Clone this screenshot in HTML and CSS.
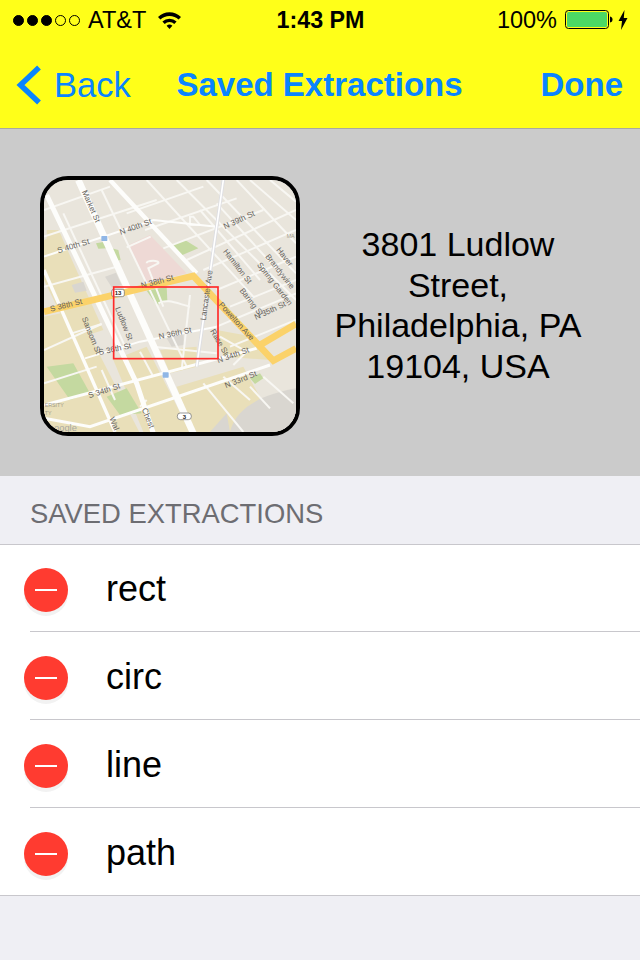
FILE: index.html
```html
<!DOCTYPE html>
<html lang="en">
<head>
  <meta charset="UTF-8" />
  <title>Saved Extractions</title>
  <link rel="stylesheet" href="styles.css">
</head>
<body>
  <div class="top-bar">
    <div class="status-bar">
      <div class="status-left">
        <div class="signal">
          <span class="dot"></span><span class="dot"></span><span class="dot"></span><span class="dot empty"></span><span class="dot empty"></span>
        </div>
        <span class="carrier">AT&amp;T</span>
        <svg class="wifi" width="25" height="20" viewBox="0 0 25 20">
          <path d="M1 7 A16.5 16.5 0 0 1 24 7 L21.6 9.6 A13 13 0 0 0 3.4 9.6 Z" />
          <path d="M5.4 11.5 A10.3 10.3 0 0 1 19.6 11.5 L17.3 14 A7 7 0 0 0 7.7 14 Z" />
          <path d="M9.6 15.8 A4.4 4.4 0 0 1 15.4 15.8 L12.5 19 Z" />
        </svg>
      </div>
      <div class="status-time">1:43 PM</div>
      <div class="status-right">
        <span class="percent">100%</span>
        <svg class="battery" width="49" height="20" viewBox="0 0 49 20">
          <rect x="0.5" y="0.5" width="43" height="18" rx="3" fill="none" stroke="#000" />
          <rect x="2" y="2" width="40" height="15" rx="1.5" fill="#4cd964" />
          <path d="M45 6.5 C47 7 47.5 8 47.5 9.5 C47.5 11 47 12 45 12.5 Z" />
        </svg>
        <svg class="bolt" width="10" height="20" viewBox="0 0 10 20">
          <path d="M6.5 0 L0.5 11 H4 L3 20 L9.5 8 H5.8 Z" />
        </svg>
      </div>
    </div>
    <div class="nav-bar">
      <a class="nav-back">
        <svg width="26" height="42" viewBox="0 0 26 42">
          <path d="M23 3.5 L4.5 21 L23 38.5" fill="none" stroke="#0a84ff" stroke-width="5.5" />
        </svg>
        <span>Back</span>
      </a>
      <div class="nav-title">Saved Extractions</div>
      <a class="nav-done">Done</a>
    </div>
  </div>

  <div class="summary">
    <div class="map-frame">
      <svg class="map" viewBox="42 30 756 756" preserveAspectRatio="none">
        <rect x="42" y="30" width="756" height="756" fill="#e9e5dc" />

        <!-- tan blocks -->
        <g fill="#e9dfb9">
          <path d="M42 210 L90 190 L220 480 L130 510 L42 330 Z" />
          <path d="M42 440 L140 420 L330 790 L42 790 Z" />
          <path d="M250 570 L350 530 L480 786 L340 786 Z" />
          <path d="M390 540 L500 530 L500 590 L420 610 Z" />
          <path d="M440 650 L640 590 L700 700 L600 790 L490 786 Z" />
          <path d="M560 480 L670 500 L720 570 L580 560 Z" />
          <path d="M50 180 L85 180 L95 200 L50 215 Z" />
        </g>

        <path d="M295 225 L360 195 L470 310 L350 340 Z" fill="#eed9d5" />
        <g fill="#c4d9a0">
          <path d="M420 225 L465 210 L505 235 L450 258 Z" />
          <path d="M350 362 L410 350 L412 392 L380 405 Z" />
          <path d="M50 590 L130 580 L180 670 L120 690 Z" />
          <path d="M230 680 L290 655 L335 730 L270 735 Z" />
          <path d="M198 220 L225 215 L232 235 L205 236 Z" />
          <path d="M245 235 L265 240 L272 270 L258 272 Z" />
          <path d="M660 625 L690 610 L700 625 L675 642 Z" />
        </g>
        <g fill="#d9d6d0">
          <path d="M225 320 L258 308 L275 345 L245 352 Z" />
          <path d="M125 345 L160 335 L170 362 L135 368 Z" />
          <path d="M410 505 L460 490 L462 525 L425 530 Z" />
          <path d="M540 786 L590 730 L600 786 Z" />
          <path d="M600 786 C620 700 720 670 798 655 L798 786 Z" />
        </g>

        <!-- small streets -->
        <g fill="none" stroke="#f8f7f3" stroke-width="6">
          <path d="M42 120 L240 50" />
          <path d="M42 200 L380 90" />
          <path d="M290 130 L520 50" />
          <path d="M345 180 L620 85" />
          <path d="M400 235 L700 120" />
          <path d="M470 270 L798 120" />
          <path d="M520 300 L798 180" />
          <path d="M560 360 L798 260" />
          <path d="M600 410 L798 330" />
          <path d="M42 350 L260 290" />
          <path d="M290 232 L362 200" />
          <path d="M42 540 L215 462" />
          <path d="M125 490 L215 462" />
          <path d="M560 470 L798 370" />
          <path d="M600 530 L798 450" />
          <path d="M440 30 L798 390" />
          <path d="M530 30 L798 310" />
          <path d="M620 30 L798 220" />
          <path d="M350 30 L670 380" />
          <path d="M660 30 L798 150" />
          <path d="M720 30 L798 95" />
          <path d="M215 60 L470 590" />
          <path d="M100 130 L290 540" />
          <path d="M510 120 L690 330" />
          <path d="M560 100 L760 320" />
          <path d="M480 375 L455 600" />
          <path d="M385 400 C410 385 440 400 480 410" />
          <path d="M350 280 C350 270 390 270 385 280 L355 295 L400 410" />
          <path d="M480 140 L480 165 L510 165 L490 140 Z" />
          <path d="M570 500 L650 545 L610 585" />
          <path d="M520 640 L640 786" />
          <path d="M580 620 L660 690" />
          <path d="M660 650 L720 715" />
          <path d="M700 620 L790 700" />
          <path d="M215 600 L255 690" />
          <path d="M330 545 L370 620" />
          <path d="M350 690 L330 710" />
          <path d="M370 530 L560 550" />
          <path d="M42 640 L200 590" />
        </g>

        <!-- main streets -->
        <g fill="none" stroke="#fdfdfb" stroke-linecap="butt">
          <path d="M145 30 L490 790" stroke-width="20" />
          <path d="M50 75 L320 640 L370 790" stroke-width="15" />
          <path d="M42 300 L255 786" stroke-width="10" />
          <path d="M240 30 L500 310" stroke-width="13" />
          <path d="M42 705 L680 535" stroke-width="9" />
          <path d="M42 745 L180 770 L720 585" stroke-width="9" />
          <path d="M165 565 L330 515 L560 470" stroke-width="6" />
          <path d="M42 260 L370 150 L560 170" stroke-width="6" />
          <path d="M780 786 L798 770" stroke-width="5" />
        </g>
        <path d="M580 30 L500 590" fill="none" stroke="#dcdde2" stroke-width="10" />
        <path d="M580 30 L500 590" fill="none" stroke="#fff" stroke-width="5" />

        <!-- yellow avenues -->
        <g fill="none" stroke="#fbd26a" stroke-width="20">
          <path d="M42 425 L490 318 L730 572 L798 535" />
          <path d="M690 525 L798 462" />
        </g>

        <!-- labels -->
        <g class="map-label">
          <text transform="translate(155 65) rotate(66)">Market St</text>
          <text transform="translate(272 195) rotate(-20)">N 40th St</text>
          <text transform="translate(85 250) rotate(-17)">S 40th St</text>
          <text transform="translate(585 178) rotate(-25)">N 39th St</text>
          <text transform="translate(578 245) rotate(52)">Hamilton St</text>
          <text transform="translate(738 240) rotate(52)">Haver</text>
          <text transform="translate(705 260) rotate(52)">Brandywine</text>
          <text transform="translate(680 285) rotate(52)">Spring Garden</text>
          <text transform="translate(628 362) rotate(52)">Baring St</text>
          <text transform="translate(678 450) rotate(-25)">N 35th St</text>
          <text transform="translate(335 355) rotate(-15)">N 38th St</text>
          <text transform="translate(62 425) rotate(-14)">S 38th St</text>
          <text transform="translate(155 445) rotate(68)">Sansom St</text>
          <text transform="translate(255 415) rotate(68)">Ludlow St</text>
          <text transform="translate(527 452) rotate(-82)">Lancaster Ave</text>
          <text transform="translate(565 405) rotate(48)">Powelton Ave</text>
          <text transform="translate(540 483) rotate(60)">Race St</text>
          <text transform="translate(388 508) rotate(-12)">N 36th St</text>
          <text transform="translate(208 555) rotate(-12)">S 36th St</text>
          <text transform="translate(565 580) rotate(-20)">N 34th St</text>
          <text transform="translate(178 685) rotate(-18)">S 34th St</text>
          <text transform="translate(588 655) rotate(-22)">N 33rd St</text>
          <text transform="translate(335 718) rotate(68)">Chest</text>
          <text transform="translate(238 745) rotate(68)">Wal</text>
          <text x="44" y="710" class="map-small">ERSITY</text>
          <text x="44" y="734" class="map-small">TY</text>
          <text x="770" y="203" class="map-small">MA</text>
          <text x="72" y="782" class="map-google">oogle</text>
        </g>

        <!-- route shields -->
        <rect x="245" y="358" width="38" height="22" rx="6" fill="#fff" stroke="#666" stroke-width="2" />
        <text x="264" y="376" class="map-shield">13</text>
        <rect x="442" y="729" width="42" height="20" rx="9" fill="#fff" stroke="#666" stroke-width="2" />
        <text x="463" y="746" class="map-shield">3</text>
        <rect x="214" y="198" width="18" height="15" rx="2" fill="#8fb6e6" />
        <rect x="398" y="607" width="18" height="16" rx="2" fill="#8fb6e6" />

        <!-- selection -->
        <rect x="251" y="351" width="313" height="215" fill="none" stroke="#ff2a2a" stroke-width="5" />
      </svg>
    </div>
    <div class="address">3801 Ludlow<br>Street,<br>Philadelphia, PA<br>19104, USA</div>
  </div>

  <div class="section-head">SAVED EXTRACTIONS</div>
  <ul class="list">
    <li class="list-row"><span class="delete"></span><span class="row-label">rect</span></li>
    <li class="list-row"><span class="delete"></span><span class="row-label">circ</span></li>
    <li class="list-row"><span class="delete"></span><span class="row-label">line</span></li>
    <li class="list-row"><span class="delete"></span><span class="row-label">path</span></li>
  </ul>
</body>
</html>
```

FILE: styles.css
```css
:root {
  --tint: #0a84ff;
  --table-bg: #efeff4;
  --line: #c8c7cc;
}

html, body {
  height: 100%;
}

body {
  margin: 0;
  height: 960px;
  overflow: hidden;
  background: var(--table-bg);
  font-family: 'Liberation Sans', Arial, sans-serif;
  color: #000;
}

.top-bar {
  height: 128px;
  background: #ffff19;
  border-bottom: 1px solid #a8a8a0;
}

.status-bar {
  height: 40px;
  padding: 0 12px 0 13px;
  display: grid;
  grid-template-columns: 1fr auto 1fr;
  align-items: center;
  font-size: 23.5px;
}

.status-left, .status-right {
  display: flex;
  align-items: center;
}

.status-right {
  justify-content: flex-end;
}

.signal {
  display: flex;
  gap: 3px;
}

.dot {
  width: 11px;
  height: 11px;
  box-sizing: border-box;
  border-radius: 50%;
  background: #000;
  border: 1px solid #000;
}

.dot.empty {
  background: none;
}

.carrier {
  margin-left: 8px;
}

.wifi {
  margin-left: 11px;
}

.status-time {
  font-weight: 700;
  font-size: 23.3px;
}

.percent {
  margin-right: 8px;
}

.bolt {
  margin-left: 4px;
}

.nav-bar {
  height: 88px;
  padding: 2px 17px 0 16px;
  box-sizing: border-box;
  display: grid;
  grid-template-columns: 1fr auto 1fr;
  align-items: center;
  font-size: 34.5px;
  color: var(--tint);
}

.nav-back {
  display: flex;
  align-items: center;
  gap: 12px;
}

.nav-title {
  font-weight: 700;
  font-size: 33px;
}

.nav-done {
  justify-self: end;
  font-weight: 700;
  font-size: 33px;
}

.summary {
  height: 347px;
  box-sizing: border-box;
  padding: 47px 0 0 40px;
  background: #cbcbcb;
  display: flex;
  align-items: flex-start;
}

.map-frame {
  width: 260px;
  height: 260px;
  box-sizing: border-box;
  border: 4px solid #000;
  border-radius: 28px;
  overflow: hidden;
  flex-shrink: 0;
}

.map {
  display: block;
  width: 252px;
  height: 252px;
}

.map-label {
  font-size: 24px;
  fill: #66635c;
}

.map-small {
  font-size: 16px;
  fill: #a09a88;
}

.map-google {
  font-size: 28px;
  fill: #a8a8a0;
}

.map-shield {
  font-size: 18px;
  font-weight: 700;
  fill: #222;
  text-anchor: middle;
}

.address {
  flex: 1;
  margin-top: 48px;
  padding-right: 24px;
  font-size: 34px;
  line-height: 40.5px;
  text-align: center;
}

.section-head {
  height: 68px;
  box-sizing: border-box;
  padding: 22px 0 0 30px;
  font-size: 27.4px;
  color: #6d6d72;
}

.list {
  list-style: none;
  margin: 0;
  padding: 0;
  background: #fff;
  border-top: 1px solid var(--line);
  border-bottom: 1px solid var(--line);
}

.list-row {
  height: 87px;
  box-sizing: border-box;
  padding: 4px 0 0 24px;
  display: flex;
  align-items: center;
  position: relative;
}

.list-row:first-child {
  height: 86px;
}

.list-row + .list-row {
  margin-top: 1px;
}

.list-row + .list-row::before {
  content: "";
  position: absolute;
  top: -1px;
  left: 30px;
  right: 0;
  height: 1px;
  background: var(--line);
}

.delete {
  width: 44px;
  height: 44px;
  border-radius: 50%;
  background: #ff3b30;
  box-shadow: 0 4px 0 #f2f2f2;
  display: flex;
  align-items: center;
  justify-content: center;
}

.delete::after {
  content: "";
  width: 22px;
  height: 2px;
  background: #fff;
}

.row-label {
  margin-left: 38px;
  margin-top: -2px;
  font-size: 36px;
}
```
